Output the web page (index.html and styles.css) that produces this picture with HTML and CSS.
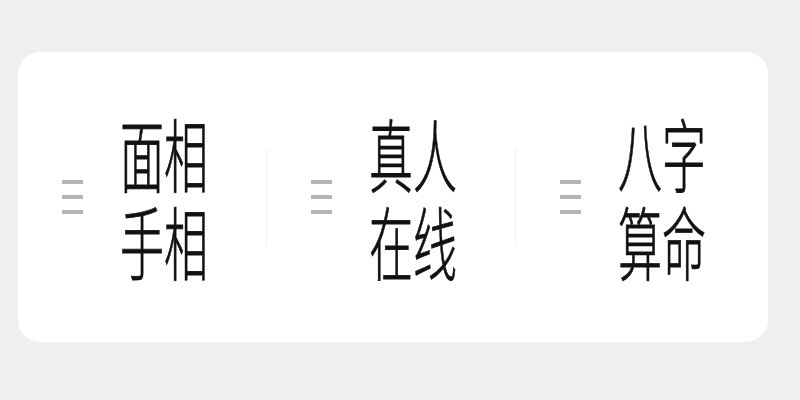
FILE: index.html
```html
<!DOCTYPE html>
<html lang="zh-CN">
<head>
<meta charset="utf-8">
<link rel="stylesheet" href="styles.css">
</head>
<body>
<div class="card">
  <div class="item">
    <div class="icon"><span></span><span></span><span></span></div>
    <div class="label"><div>面相</div><div>手相</div></div>
  </div>
  <div class="divider"></div>
  <div class="item">
    <div class="icon"><span></span><span></span><span></span></div>
    <div class="label"><div>真人</div><div>在线</div></div>
  </div>
  <div class="divider"></div>
  <div class="item">
    <div class="icon"><span></span><span></span><span></span></div>
    <div class="label"><div>八字</div><div>算命</div></div>
  </div>
</div>
</body>
</html>
```
FILE: styles.css
```css
html, body {
  margin: 0;
  padding: 0;
  background: #efefef;
  width: 800px;
  height: 400px;
  overflow: hidden;
}
.card {
  margin: 52px 0 0 18px;
  width: 750px;
  height: 290px;
  background: #ffffff;
  border-radius: 22px;
  display: flex;
  align-items: center;
}
.item {
  width: 248px;
  height: 100%;
  display: flex;
  align-items: center;
  padding-left: 44px;
  box-sizing: border-box;
}
.item:last-child {
  width: 251px;
}
.divider {
  width: 1px;
  height: 97px;
  background: #f1f1f1;
}
.icon {
  width: 21px;
  display: flex;
  flex-direction: column;
  gap: 11px;
}
.icon span {
  display: block;
  height: 4px;
  background: #b4b4b4;
}
.label {
  margin-left: 37px;
  font-family: "Noto Sans CJK SC", sans-serif;
  font-weight: 300;
  font-size: 44px;
  line-height: 49px;
  color: #111;
  transform: scaleY(1.8);
  -webkit-text-stroke: 0.45px #111;
  letter-spacing: 0;
}
```
